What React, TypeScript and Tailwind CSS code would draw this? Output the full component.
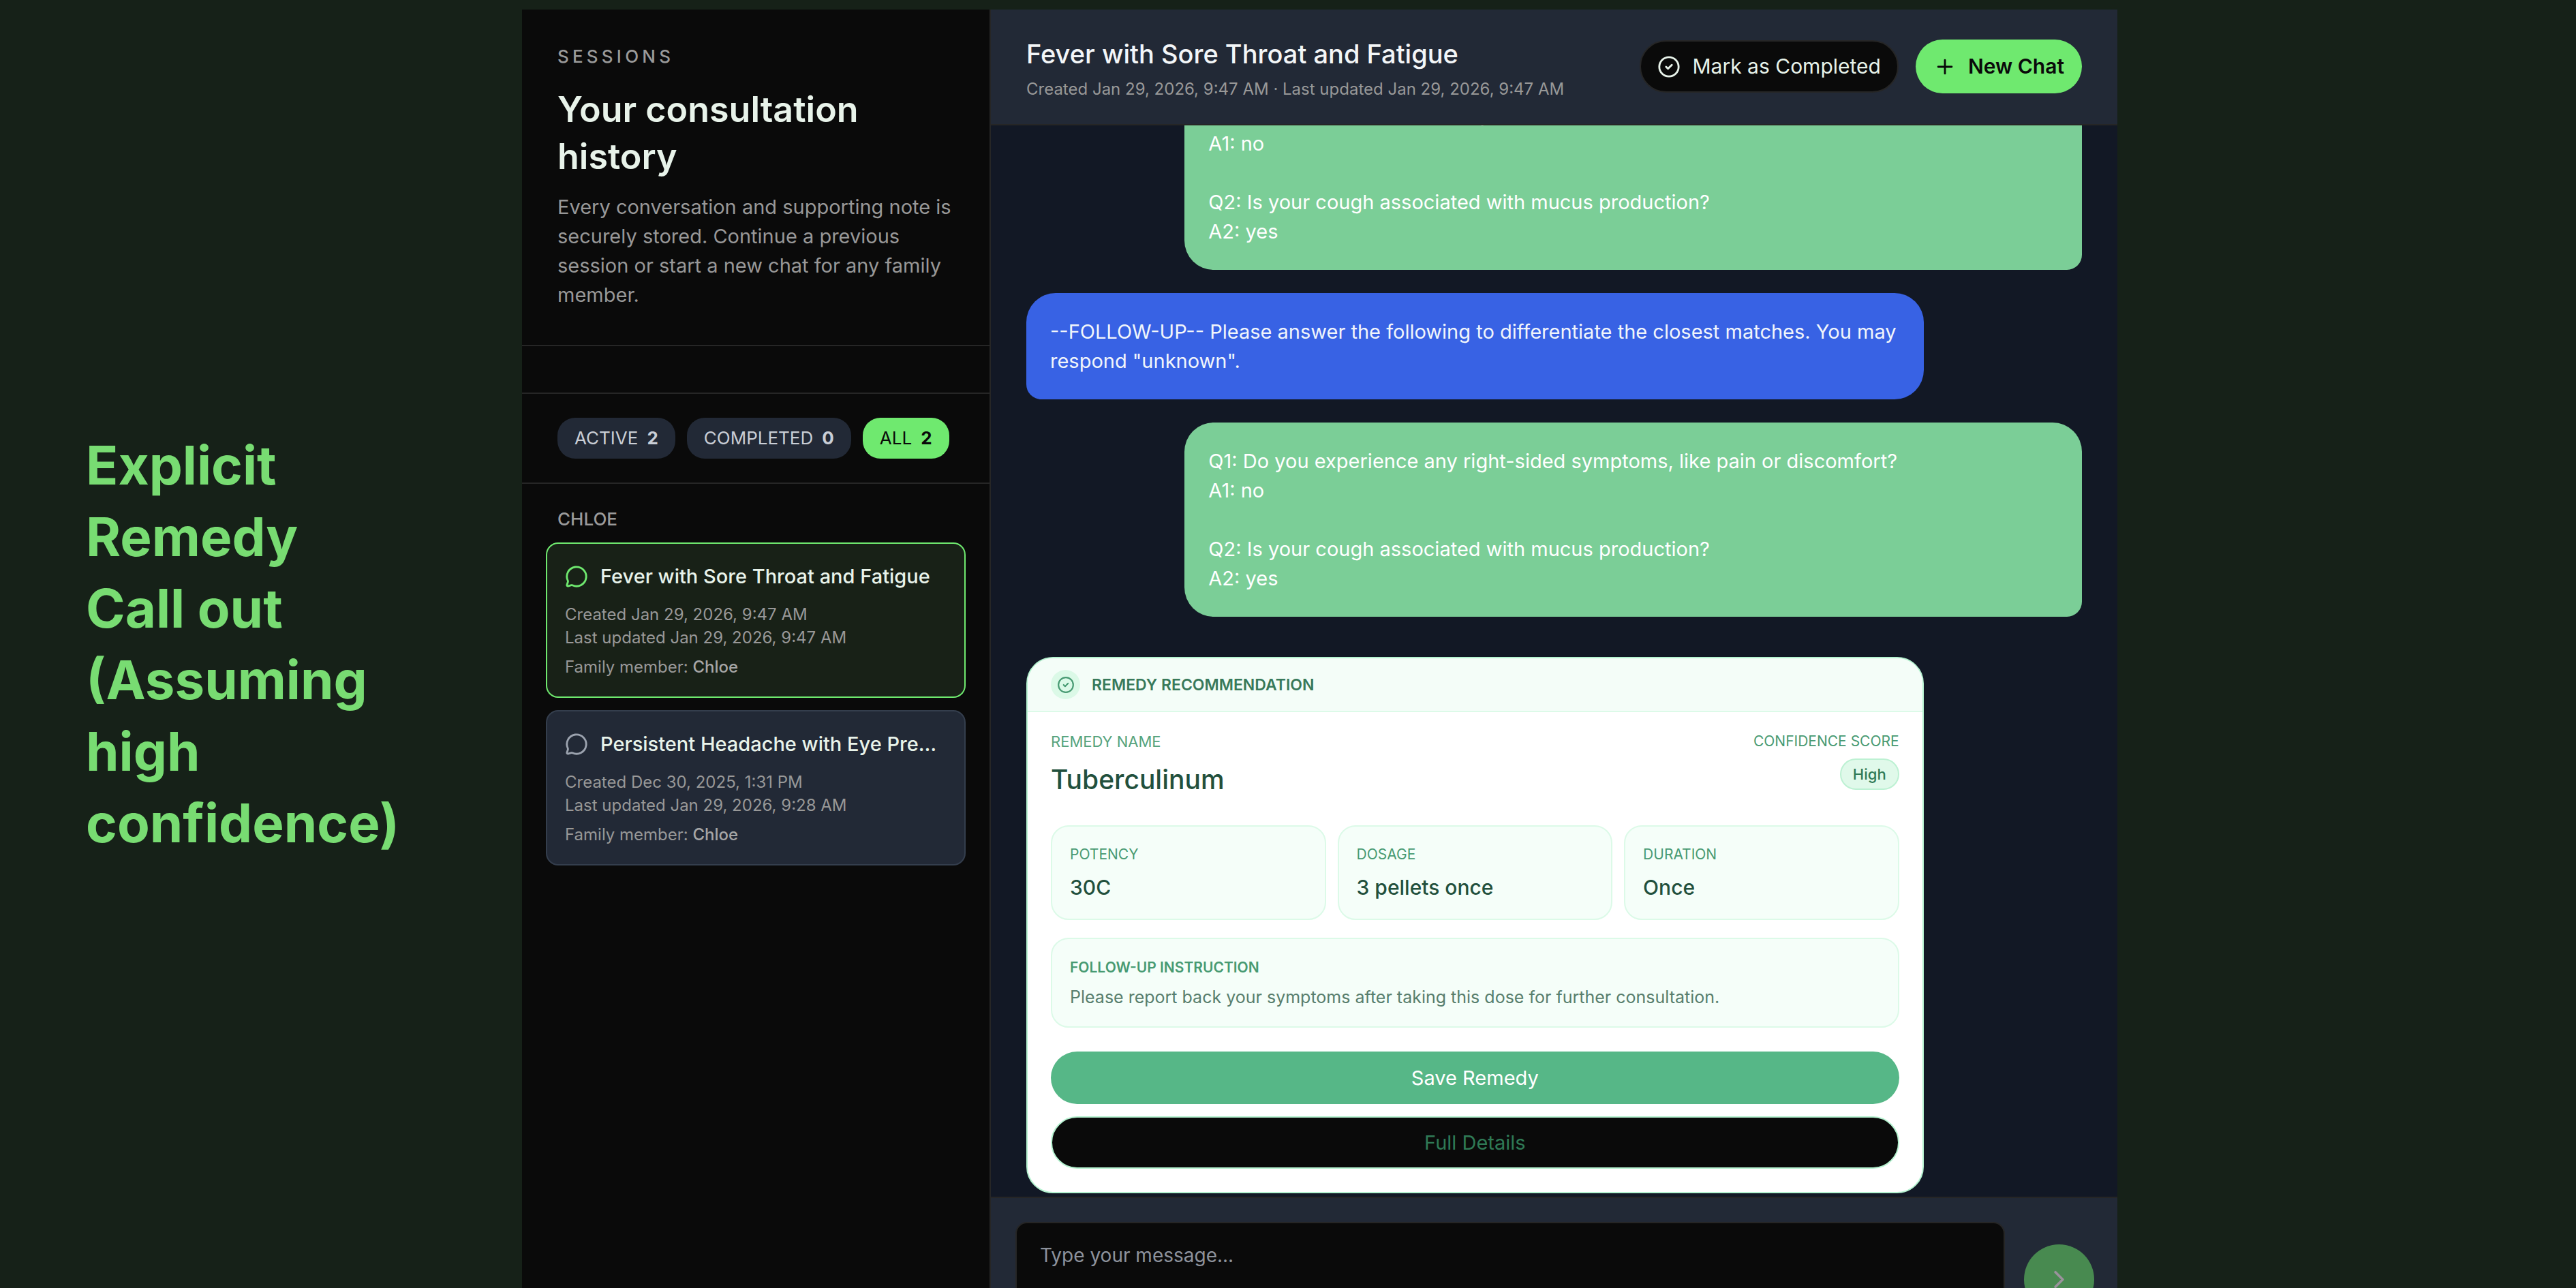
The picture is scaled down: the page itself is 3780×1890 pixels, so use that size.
import { ReactNode } from 'react'
import { ChevronRight, CircleCheck, MessageCircle, Plus } from 'lucide-react'
import clsx from 'clsx'

const filters = [
  { label: 'Active', count: 2, selected: false },
  { label: 'Completed', count: 0, selected: false },
  { label: 'All', count: 2, selected: true },
]

const sessions = [
  {
    title: 'Fever with Sore Throat and Fatigue',
    created: 'Jan 29, 2026, 9:47 AM',
    updated: 'Jan 29, 2026, 9:47 AM',
    member: 'Chloe',
    selected: true,
  },
  {
    title: 'Persistent Headache with Eye Pressure',
    created: 'Dec 30, 2025, 1:31 PM',
    updated: 'Jan 29, 2026, 9:28 AM',
    member: 'Chloe',
    selected: false,
  },
]

const dosing = [
  { label: 'Potency', value: '30C' },
  { label: 'Dosage', value: '3 pellets once' },
  { label: 'Duration', value: 'Once' },
]

const answers = `Q1: Do you experience any right-sided symptoms, like pain or discomfort?
A1: no

Q2: Is your cough associated with mucus production?
A2: yes`

function SessionCard({ session }: { session: (typeof sessions)[number] }) {
  return (
    <button
      type="button"
      className={clsx(
        'flex w-full flex-col rounded-[18px] border-2 p-[26px] text-left text-[24px] leading-[34px] text-[#989898]',
        session.selected ? 'border-[#6fe96f] bg-[#182117]' : 'border-[#343e4d] bg-[#222936]',
      )}
    >
      <span className="mb-[18px] flex w-full items-center gap-[18px]">
        <MessageCircle className={clsx('size-[34px] shrink-0', session.selected ? 'text-[#6fe96f]' : 'text-[#9ca3af]')} />
        <span className="truncate text-[29px] leading-[43px] font-medium text-[#e8f3ea]">{session.title}</span>
      </span>
      <span>Created {session.created}</span>
      <span>Last updated {session.updated}</span>
      <span className="mt-[9px]">
        Family member: <span className="font-medium text-[#a6a6a6]">{session.member}</span>
      </span>
    </button>
  )
}

function Sidebar() {
  return (
    <aside className="flex w-[688px] shrink-0 flex-col border-r-2 border-[#262626] bg-[#0a0a0a]">
      <div className="border-b-2 border-[#262626] px-[52px] py-[52px]">
        <p className="text-[26px] leading-[34px] font-medium tracking-[0.2em] text-[#9a9a9a] uppercase">Sessions</p>
        <h2 className="mt-[26px] text-[52px] leading-[69px] font-semibold text-[#e8f3ea]">Your consultation history</h2>
        <p className="mt-[18px] text-[29px] leading-[43px] text-[#989898]">
          Every conversation and supporting note is securely stored. Continue a previous session or start a new chat for any family member.
        </p>
      </div>
      <div className="h-[70px] border-b-2 border-[#262626]" />
      <div className="flex gap-[17px] border-b-2 border-[#262626] px-[52px] py-[35px]">
        {filters.map((filter) => (
          <button
            key={filter.label}
            type="button"
            className={clsx(
              'flex items-center gap-[13px] rounded-[26px] px-[25px] py-[13px] text-[26px] leading-[34px]',
              filter.selected ? 'bg-[#6fe96f] text-[#0a0a0a]' : 'bg-[#222936] text-[#c9ced6]',
            )}
          >
            <span className="uppercase">{filter.label}</span>
            <span className="font-bold">{filter.count}</span>
          </button>
        ))}
      </div>
      <div className="px-[35px] pt-[35px]">
        <h3 className="mb-[17px] px-[17px] text-[26px] leading-[34px] font-medium text-[#9a9a9a] uppercase">Chloe</h3>
        <div className="flex flex-col gap-[18px]">
          {sessions.map((session) => (
            <SessionCard key={session.title} session={session} />
          ))}
        </div>
      </div>
    </aside>
  )
}

function Bubble({ own, children }: { own?: boolean; children: ReactNode }) {
  return (
    <div
      className={clsx(
        'w-[85%] shrink-0 rounded-[43px] p-[35px] text-[29px] leading-[43px] whitespace-pre-line',
        own ? 'self-end rounded-br-[22px] bg-[#7bce97] text-white' : 'rounded-bl-[22px] bg-[#3862e4] text-[#f1f5fb]',
      )}
    >
      {children}
    </div>
  )
}

function RemedyCard() {
  return (
    <section className="mt-[25px] w-[85%] shrink-0 overflow-hidden rounded-[39px] border-2 border-[#b5f2d0] bg-white">
      <header className="flex items-center gap-[17px] border-b-2 border-[#dcfae8] bg-[#f4fdf8] px-[34px] py-[17px]">
        <span className="flex size-[43px] items-center justify-center rounded-full bg-[#dbf9e7]">
          <CircleCheck className="size-[26px] text-[#479a72]" />
        </span>
        <h3 className="text-[23px] leading-[34px] font-semibold text-[#38795a] uppercase">Remedy Recommendation</h3>
      </header>
      <div className="flex flex-col gap-[26px] p-[34px] pt-[26px]">
        <div className="flex justify-between">
          <div>
            <p className="text-[22px] leading-[34px] text-[#55a37d] uppercase">Remedy Name</p>
            <p className="mt-[13px] text-[39px] leading-[52px] font-medium text-[#22503d]">Tuberculinum</p>
          </div>
          <div className="flex flex-col items-end gap-2 pb-[26px]">
            <p className="text-[21px] leading-[34px] text-[#479a72] uppercase">Confidence Score</p>
            <span className="rounded-full border-2 border-[#bdf1d3] bg-[#e0f9ea] px-[17px] py-1 text-[22px] leading-[34px] font-medium text-[#2f7a56]">High</span>
          </div>
        </div>
        <dl className="grid grid-cols-3 gap-[17px]">
          {dosing.map((item) => (
            <div key={item.label} className="rounded-[26px] border-2 border-[#dcfae8] bg-[#f5fef9] px-[26px] py-6">
              <dt className="text-[21px] leading-[34px] text-[#479a72] uppercase">{item.label}</dt>
              <dd className="mt-[10px] text-[30px] leading-[43px] font-medium text-[#22503d]">{item.value}</dd>
            </div>
          ))}
        </dl>
        <div className="rounded-[26px] border-2 border-[#dcfae8] bg-[#f5fef9] px-[26px] py-[25px]">
          <p className="text-[21px] leading-[34px] font-semibold text-[#479a72] uppercase">Follow-up Instruction</p>
          <p className="mt-2 text-[25px] leading-[36px] text-[#587e6d]">Please report back your symptoms after taking this dose for further consultation.</p>
        </div>
        <div className="flex flex-col gap-[18px] pt-[9px] text-[29px] leading-[43px]">
          <button type="button" className="rounded-full bg-[#56b787] py-[17px] text-white">
            Save Remedy
          </button>
          <button type="button" className="rounded-full border-2 border-[#b5f2d0] bg-[#0a0a0a] py-[15px] text-[#2f7a56]">
            Full Details
          </button>
        </div>
      </div>
    </section>
  )
}

export default function App() {
  return (
    <main className="grid h-screen grid-cols-[766fr_2341fr_673fr] grid-rows-[100%] overflow-hidden bg-[#162118] font-['Inter',sans-serif]">
      <div className="flex items-center px-[126px]">
        <h1 className="text-[78px] leading-[105px] font-bold text-[#78dc72]">
          Explicit Remedy
          <br />
          Call out (Assuming high confidence)
        </h1>
      </div>

      {/* the app window runs past the bottom edge of the slide */}
      <div className="mt-[14px] flex h-[calc(100vh+92px)]">
        <Sidebar />
        <div className="flex min-w-0 flex-1 flex-col bg-[#121825]">
          <header className="flex shrink-0 items-start justify-between border-b-2 border-[#262626] bg-[#222936] px-[52px] pt-[41px] pb-[34px]">
            <div>
              <h2 className="text-[38px] leading-[48px] font-medium text-[#f3f6f8]">Fever with Sore Throat and Fatigue</h2>
              <p className="mt-[11px] text-[24px] leading-[34px] text-[#989898]">Created Jan 29, 2026, 9:47 AM · Last updated Jan 29, 2026, 9:47 AM</p>
            </div>
            <div className="flex items-center gap-[25px] pt-[3px] text-[30px] leading-[43px]">
              <button type="button" className="flex items-center gap-[17px] rounded-full border-2 border-[#262626] bg-[#0a0a0a] px-6 py-[15px] text-[#e8f3ea]">
                <CircleCheck className="size-[34px]" />
                Mark as Completed
              </button>
              <button type="button" className="flex items-center gap-[17px] rounded-full bg-[#6fe96f] px-[26px] py-[18px] font-semibold text-[#0a0a0a]">
                <Plus className="size-[34px]" />
                New Chat
              </button>
            </div>
          </header>

          <div className="flex min-h-0 flex-1 flex-col justify-end gap-[34px] overflow-hidden px-[52px] pb-[5px]">
            <Bubble own>{answers}</Bubble>
            <Bubble>--FOLLOW-UP-- Please answer the following to differentiate the closest matches. You may respond "unknown".</Bubble>
            <Bubble own>{answers}</Bubble>
            <RemedyCard />
          </div>

          <form className="flex shrink-0 items-center gap-[28px] border-t-2 border-[#262626] bg-[#222936] py-[35px] pr-[34px] pl-9">
            <textarea
              aria-label="Message"
              placeholder="Type your message..."
              className="h-[168px] flex-1 resize-none rounded-[17px] border-2 border-[#262626] bg-[#0a0a0a] px-[34px] py-[26px] text-[28px] leading-[43px] text-[#e8f3ea] placeholder:text-[#8d929c]"
            />
            <button type="submit" aria-label="Send" className="flex size-[103px] shrink-0 items-center justify-center rounded-full bg-[#488a50] text-[#9a929c]">
              <ChevronRight className="size-[43px]" />
            </button>
          </form>
        </div>
      </div>
    </main>
  )
}
